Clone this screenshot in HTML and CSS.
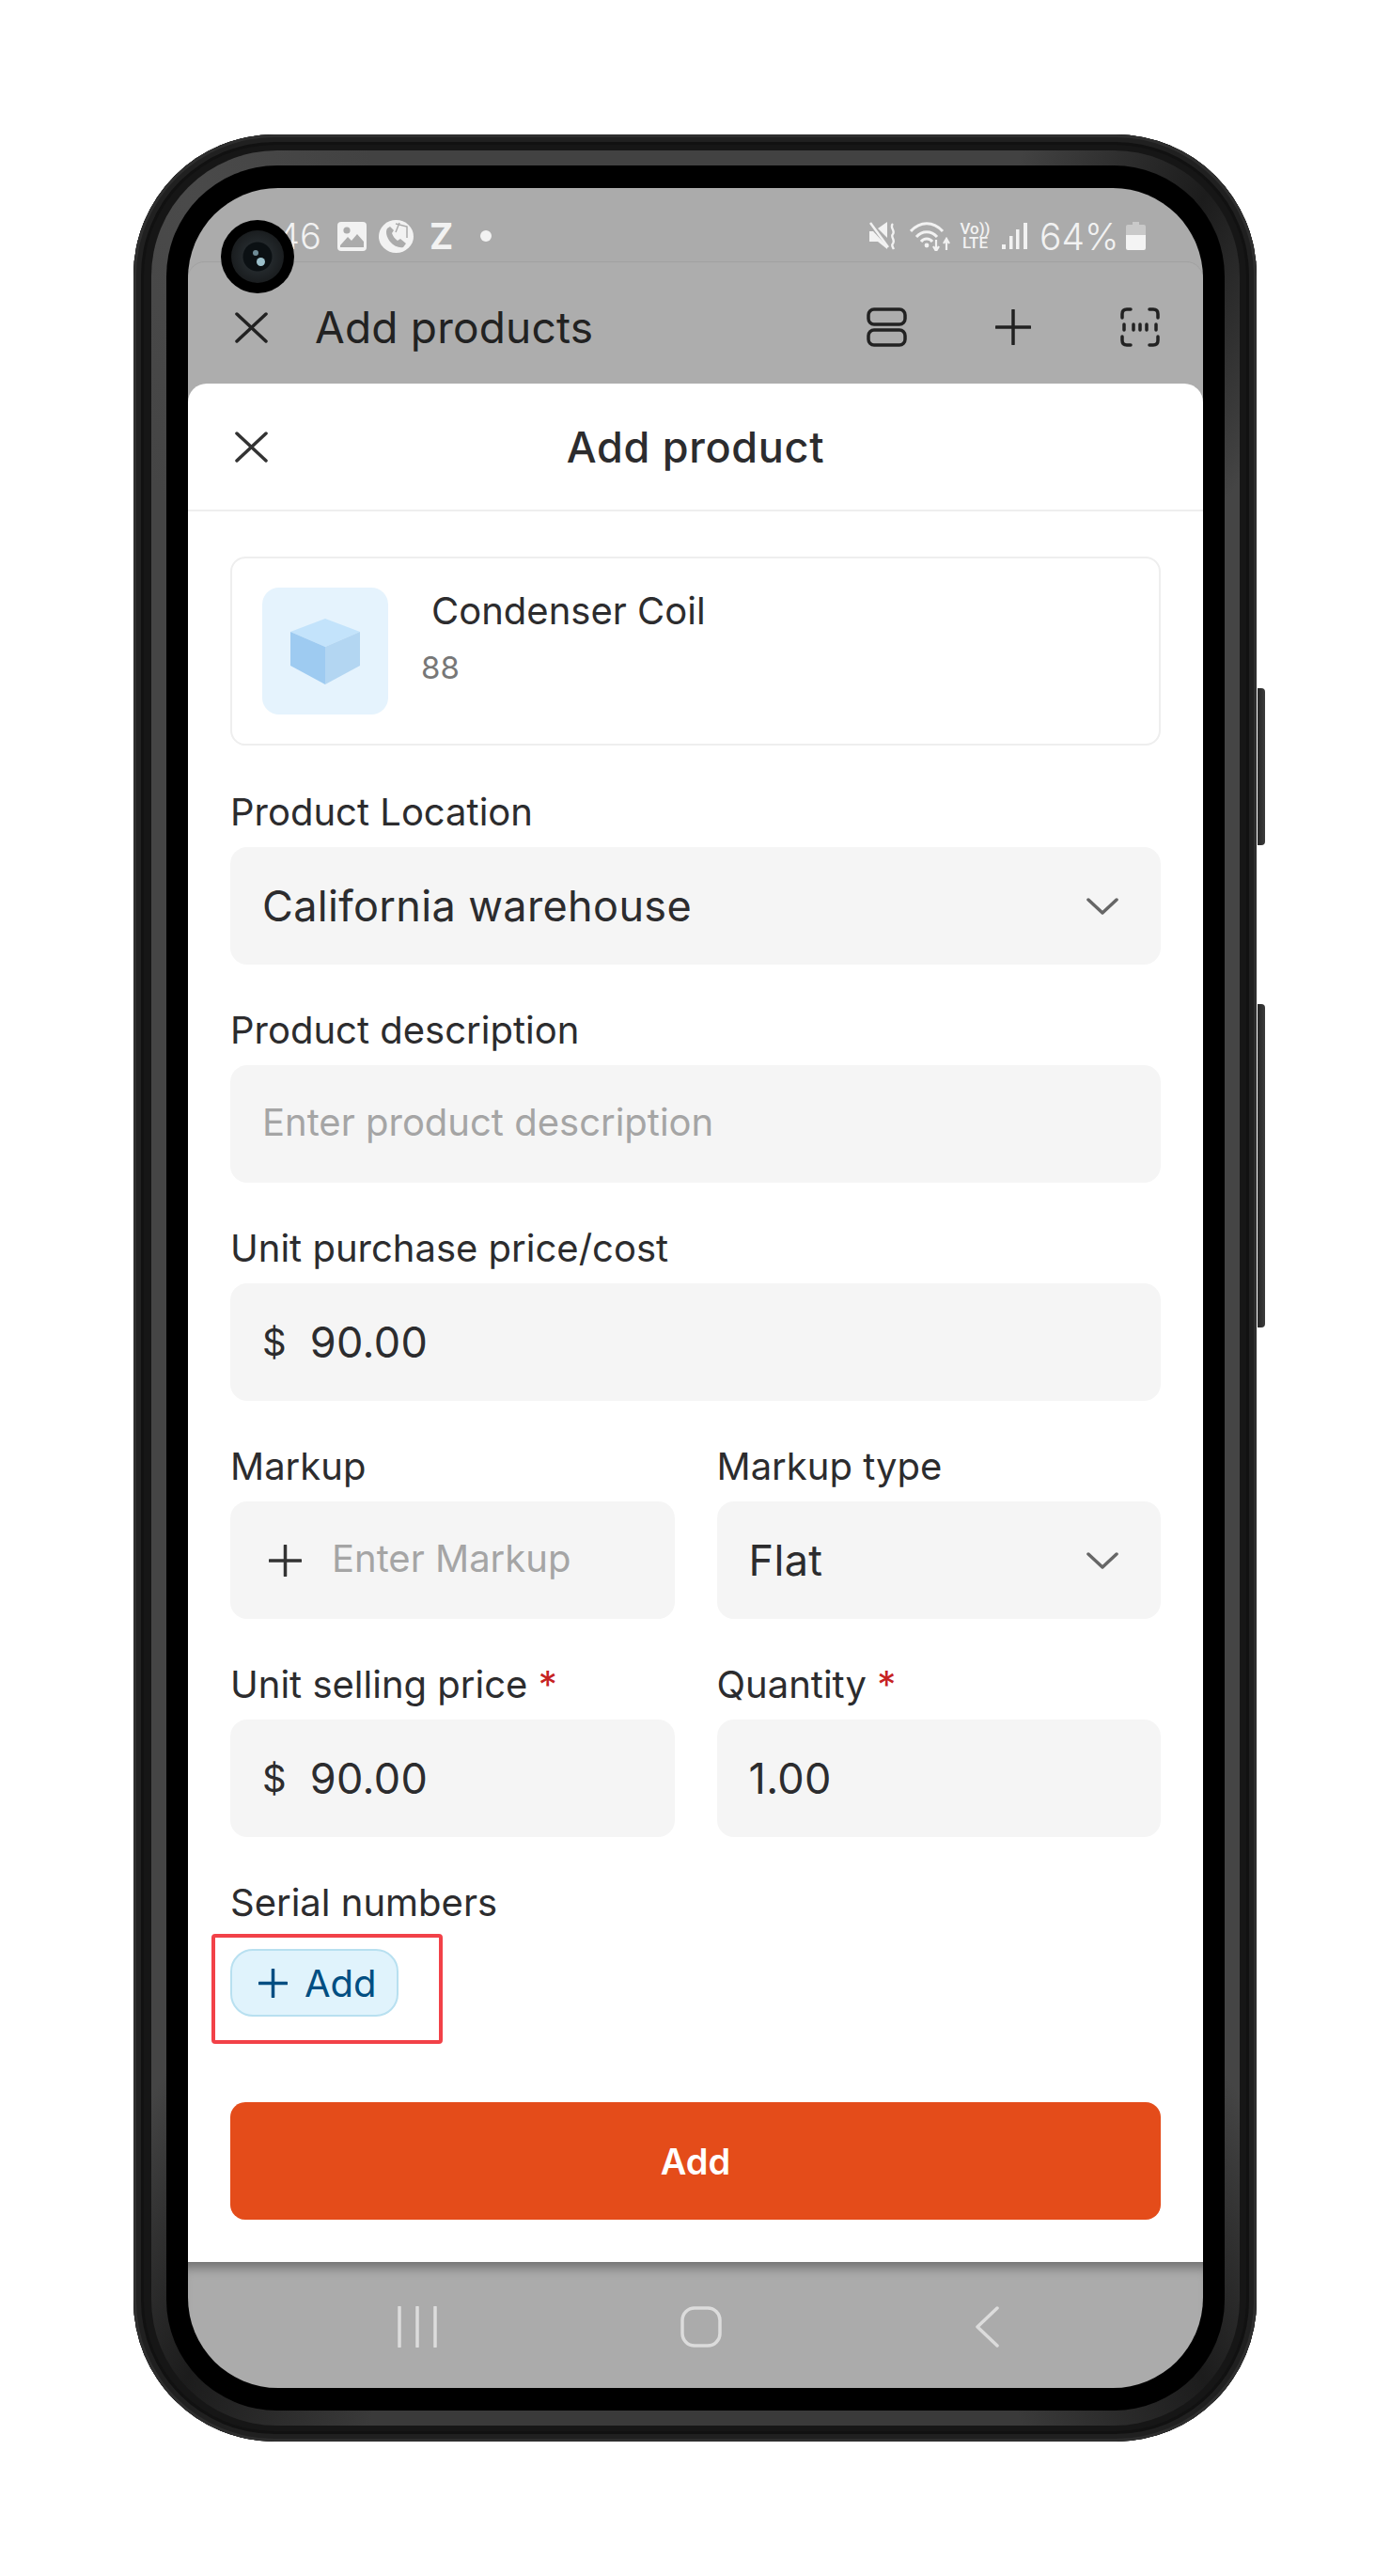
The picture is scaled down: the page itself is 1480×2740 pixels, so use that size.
FILE: index.html
```html
<!DOCTYPE html>
<html lang="en">
<head>
<meta charset="utf-8">
<title>Add product</title>
<link rel="stylesheet" href="styles.css">
</head>
<body>
<div class="phone">
  <div class="side-btn side-btn-power"></div>
  <div class="side-btn side-btn-volume"></div>
  <div class="ring">
    <div class="bezel">
      <div class="screen">
        <div class="camera"><div class="lens"><div class="glint glint-a"></div><div class="glint glint-b"></div></div></div>
        <div class="status">
          <div class="status-left">
            <span class="time">46</span>
            <svg class="st-img" viewBox="0 0 31 31"><rect width="31" height="31" rx="4" fill="#f2f2f2"/><circle cx="10" cy="9" r="3.6" fill="#ababab"/><path d="M3 25 L11 16 L15 20 L21 13 L28 21 V27 H3Z" fill="#ababab"/></svg>
            <svg class="st-call" viewBox="0 0 37 35"><ellipse cx="18.500" cy="17.500" rx="18.500" ry="17.500" fill="#f2f2f2"/><path d="M9 9 C7 12 8 18 12 23 C16 28 22 30 26 29 L29 25 L23 20 L20 22 C17 20 15 17 14 14 L16 11 L12 7Z" fill="#ababab"/><path d="M18 4 L30 7 L30 19 M22 3 L18 13" fill="none" stroke="#ababab" stroke-width="1.500"/></svg>
            <span class="st-z">Z</span>
            <span class="st-dot"></span>
          </div>
          <div class="status-right">
            <svg class="st-mute" viewBox="0 0 29 30"><path d="M0 10 H4 L19 26 V29 L9 21 H0Z" fill="#f2f2f2"/><path d="M9 7 L19 0 V17Z" fill="#f2f2f2"/><path d="M1 1 L20 27" stroke="#f2f2f2" stroke-width="2.500"/><path d="M25 2 C21 6 28 9 25 13 C22 16 28 19 25 23 C23 25 25 27 26 29" fill="none" stroke="#f2f2f2" stroke-width="2.400"/></svg>
            <svg class="st-wifi" viewBox="0 0 44 32"><path d="M1 11 C11 0 25 0 35 11 M7 17 C13 10 23 10 29 17 M12 22 C15 18 21 18 24 22" fill="none" stroke="#f2f2f2" stroke-width="3"/><circle cx="18" cy="26" r="2.400" fill="#f2f2f2"/><path d="M28 20 V31 M25 27 L28 32 L31 27 M39 31 V20 M36 24 L39 19 L42 24" fill="none" stroke="#f2f2f2" stroke-width="2.200"/></svg>
            <span class="st-volte"><span>Vo))</span><span>LTE</span></span>
            <svg class="st-signal" viewBox="0 0 27 30"><rect x="0" y="24" width="4" height="5" fill="#f2f2f2"/><rect x="8" y="15" width="3.500" height="14" fill="#f2f2f2"/><rect x="15" y="8" width="3.500" height="21" fill="#f2f2f2"/><rect x="23" y="1" width="4" height="28" fill="#f2f2f2"/></svg>
            <span class="st-pct">64%</span>
            <svg class="st-batt" viewBox="0 0 21 30"><path d="M7 0 H14 V3 H19 Q21 3 21 5 V14 H0 V5 Q0 3 2 3 H7Z" fill="#c9c9c9"/><path d="M0 14 H21 V28 Q21 30 19 30 H2 Q0 30 0 28Z" fill="#f4f4f4"/></svg>
          </div>
        </div>
        <div class="topcard">
          <svg class="ic-x" viewBox="0 0 35 33"><path d="M2 2 L33 31 M33 2 L2 31" fill="none" stroke="#222" stroke-width="3.500" stroke-linecap="round"/></svg>
          <span class="top-title">Add products</span>
          <div class="top-actions">
            <svg class="ic-list" viewBox="0 0 43 42"><rect x="2" y="2" width="39" height="16" rx="6" fill="none" stroke="#222" stroke-width="3.500"/><rect x="2" y="24" width="39" height="16" rx="6" fill="none" stroke="#222" stroke-width="3.500"/></svg>
            <svg class="ic-plus" viewBox="0 0 38 38"><path d="M19 1 V37 M1 19 H37" fill="none" stroke="#222" stroke-width="3.500" stroke-linecap="round"/></svg>
            <svg class="ic-scan" viewBox="0 0 42 42"><path d="M2 11 V7 Q2 2 7 2 H11 M31 2 H35 Q40 2 40 7 V11 M40 31 V35 Q40 40 35 40 H31 M11 40 H7 Q2 40 2 35 V31" fill="none" stroke="#222" stroke-width="3.500" stroke-linecap="round"/><path d="M4 18 V24 M14 18 V24 M21 18 V24 M28 18 V24 M38 18 V24" fill="none" stroke="#222" stroke-width="3.500" stroke-linecap="round"/></svg>
          </div>
        </div>
        <div class="sheet">
          <div class="sheet-head">
            <svg class="ic-x" viewBox="0 0 35 33"><path d="M2 2 L33 31 M33 2 L2 31" fill="none" stroke="#333" stroke-width="3.500" stroke-linecap="round"/></svg>
            <span class="sheet-title">Add product</span>
            <span></span>
          </div>
          <div class="form">
            <div class="product-card">
              <div class="thumb">
                <svg class="cube" viewBox="0 0 74 70"><path d="M37 0 L74 14 L37 30 L0 14Z" fill="#c3e3fb"/><path d="M0 14 L37 30 V70 L0 50Z" fill="#9ecbf1"/><path d="M74 14 L37 30 V70 L74 50Z" fill="#b3d6f2"/></svg>
              </div>
              <div class="product-text">
                <span class="product-name">Condenser Coil</span>
                <span class="product-sku">88</span>
              </div>
            </div>

            <div class="field">
              <label class="label">Product Location</label>
              <div class="input">
                <span class="value">California warehouse</span>
                <svg class="chev" viewBox="0 0 34 18"><path d="M2 2 L17 16 L32 2" fill="none" stroke="#666" stroke-width="3.500" stroke-linecap="round" stroke-linejoin="round"/></svg>
              </div>
            </div>

            <div class="field">
              <label class="label">Product description</label>
              <div class="input"><span class="placeholder">Enter product description</span></div>
            </div>

            <div class="field">
              <label class="label">Unit purchase price/cost</label>
              <div class="input"><span class="currency">$</span><span class="value">90.00</span></div>
            </div>

            <div class="row">
              <div class="field">
                <label class="label">Markup</label>
                <div class="input input-plus">
                  <svg class="ic-small-plus" viewBox="0 0 35 34"><path d="M17.500 1 V33 M1 17 H34" fill="none" stroke="#333" stroke-width="3.500" stroke-linecap="round"/></svg>
                  <span class="placeholder">Enter Markup</span>
                </div>
              </div>
              <div class="field">
                <label class="label">Markup type</label>
                <div class="input">
                  <span class="value">Flat</span>
                  <svg class="chev" viewBox="0 0 34 18"><path d="M2 2 L17 16 L32 2" fill="none" stroke="#666" stroke-width="3.500" stroke-linecap="round" stroke-linejoin="round"/></svg>
                </div>
              </div>
            </div>

            <div class="row">
              <div class="field">
                <label class="label">Unit selling price <span class="req">*</span></label>
                <div class="input"><span class="currency">$</span><span class="value">90.00</span></div>
              </div>
              <div class="field">
                <label class="label">Quantity <span class="req">*</span></label>
                <div class="input"><span class="value">1.00</span></div>
              </div>
            </div>

            <div class="field">
              <label class="label label-serial">Serial numbers</label>
              <div class="add-wrap">
                <div class="highlight"></div>
                <div class="add-chip">
                  <svg class="ic-chip-plus" viewBox="0 0 31 31"><path d="M15.500 1 V30 M1 15.500 H30" fill="none" stroke="#004e82" stroke-width="3.500" stroke-linecap="round"/></svg>
                  <span>Add</span>
                </div>
              </div>
            </div>

            <div class="submit">Add</div>
          </div>
        </div>
        <div class="navbar">
          <svg class="nav-recent" viewBox="0 0 42 44"><path d="M2 1 V43 M21 1 V43 M40 1 V43" fill="none" stroke="#dcdcdc" stroke-width="3.500" stroke-linecap="round"/></svg>
          <svg class="nav-home" viewBox="0 0 44 44"><rect x="2" y="2" width="40" height="40" rx="13" fill="none" stroke="#dcdcdc" stroke-width="3.500"/></svg>
          <svg class="nav-back" viewBox="0 0 26 44"><path d="M24 2 L3 22 L24 42" fill="none" stroke="#dcdcdc" stroke-width="3.500" stroke-linecap="round" stroke-linejoin="round"/></svg>
        </div>
      </div>
    </div>
  </div>
</div>
</body>
</html>
```
FILE: styles.css
```css
* { box-sizing: border-box; }
html, body { margin: 0; padding: 0; background: #fff; }
body { padding: 143px 0 0 142px; font-family: "Inter", "Liberation Sans", sans-serif; color: #2c2c2e; }
svg { display: block; flex: none; }

.phone { position: relative; width: 1195px; height: 2454px; background: #161616; border-radius: 150px; padding: 17px 18px 17px 19px; box-shadow: inset 0 0 0 3px #2e2e2e, inset 0 0 0 8px #202020, inset 0 0 0 11px #111; }
.side-btn { position: absolute; left: 1196px; width: 8px; background: linear-gradient(90deg, #262626, #3c3c3c); border-radius: 0 4px 4px 0; }
.side-btn-power { top: 589px; height: 167px; }
.side-btn-volume { top: 925px; height: 344px; }
.ring { height: 100%; border-radius: 134px; padding: 16px; background: conic-gradient(#424242 0 16deg, #1c1c1c 25deg, #454545 34deg 146deg, #1c1c1c 155deg, #3a3a3a 164deg 196deg, #1c1c1c 205deg, #454545 214deg 326deg, #4a4a4a 335deg, #424242 344deg); }
.bezel { height: 100%; background: #000; border-radius: 118px; padding: 24px 23px; }
.screen { position: relative; height: 100%; background: #ababab; border-radius: 96px; overflow: hidden; display: flex; flex-direction: column; }

.camera { position: absolute; left: 35px; top: 34px; width: 78px; height: 78px; background: #000; border-radius: 50%; display: flex; align-items: center; justify-content: center; z-index: 5; }
.lens { position: relative; width: 56px; height: 56px; border-radius: 50%; background: radial-gradient(circle, #0b1013 0 15px, #23282b 16px, #1a1d1f 28px); }
.glint { position: absolute; border-radius: 50%; }
.glint-a { left: 23px; top: 21px; width: 6px; height: 6px; background: #6e8b96; }
.glint-b { left: 27px; top: 29px; width: 9px; height: 9px; background: #9cc0cb; }

.status { height: 79px; flex: none; display: flex; justify-content: space-between; padding: 33px 61px 0 0; color: #f2f2f2; font-family: "Inter", sans-serif; }
.status-left, .status-right { display: flex; align-items: center; height: 36px; }
.status-left { padding-left: 95px; }
.time { font-size: 38px; font-weight: 300; width: 46px; text-align: right; }
.st-img { width: 31px; height: 31px; margin-left: 18px; }
.st-call { width: 37px; height: 35px; margin-left: 13px; }
.st-z { font-size: 38px; font-weight: 700; margin-left: 17px; width: 23px; }
.st-dot { width: 12px; height: 12px; background: #f2f2f2; border-radius: 50%; margin-left: 31px; }
.st-mute { width: 29px; height: 30px; }
.st-wifi { width: 44px; height: 32px; margin-left: 14px; }
.st-volte { display: flex; flex-direction: column; align-items: center; width: 31px; margin-left: 10px; font-family: "Roboto", sans-serif; font-size: 17px; line-height: 15px; font-weight: 500; }
.st-signal { width: 27px; height: 30px; margin-left: 13px; }
.st-pct { font-size: 39px; font-weight: 300; margin-left: 13px; width: 84px; white-space: nowrap; }
.st-batt { width: 21px; height: 30px; margin-left: 8px; }

.topcard { height: 160px; flex: none; margin-bottom: -31px; background: #adadad; border-radius: 18px 18px 0 0; box-shadow: 0 -1px 0 #a1a1a1; display: flex; align-items: flex-start; padding: 53px 46px 0 50px; }
.ic-x { width: 35px; height: 33px; }
.top-title { font-size: 46px; line-height: 33px; margin-left: 50px; color: #222; letter-spacing: .2px; }
.top-actions { margin-left: auto; margin-top: -5px; display: flex; align-items: center; }
.ic-list { width: 43px; height: 42px; }
.ic-plus { width: 38px; height: 38px; margin-left: 94px; }
.ic-scan { width: 42px; height: 42px; margin-left: 95px; }

.sheet { position: relative; z-index: 1; height: 1998px; flex: none; background: #fff; border-radius: 20px 20px 0 0; }
.sheet-head { height: 136px; border-bottom: 2px solid #eeeeee; display: grid; grid-template-columns: 1fr auto 1fr; align-items: center; padding: 0 50px; }
.sheet-title { font-size: 45px; font-weight: 450; color: #2c2c2e; letter-spacing: .7px; }
.form { padding: 48px 45px 0 45px; display: flex; flex-direction: column; gap: 45px; }

.product-card { height: 201px; border: 2px solid #eeeeee; border-radius: 16px; padding: 31px 32px; display: flex; gap: 35px; margin-bottom: 1px; }
.thumb { width: 134px; height: 135px; flex: none; background: #e5f3fd; border-radius: 18px; display: flex; align-items: center; justify-content: center; }
.cube { width: 74px; height: 70px; }
.product-text { display: flex; flex-direction: column; }
.product-name { font-size: 40px; line-height: 50px; margin-left: 11px; color: #2c2c2e; }
.product-sku { font-size: 33px; line-height: 40px; margin-top: 15px; color: #777; }

.field { min-width: 0; }
.label { display: block; font-size: 40px; line-height: 50px; margin-bottom: 12px; color: #2c2c2e; white-space: nowrap; }
.label-serial { margin-bottom: 24px; }
.req { color: #c62222; }
.input { height: 125px; background: #f5f5f5; border-radius: 18px; display: flex; align-items: center; padding: 0 45px 0 34px; }
.value { font-size: 45px; color: #2c2c2e; letter-spacing: .35px; }
.placeholder { font-size: 40px; color: #a5a5a5; padding-bottom: 4px; }
.currency { font-size: 40px; color: #2c2c2e; margin-right: 25px; }
.chev { width: 34px; height: 18px; margin-left: auto; }
.row { display: grid; grid-template-columns: 1fr 1fr; gap: 45px; }
.input-plus { padding-left: 41px; }
.ic-small-plus { width: 35px; height: 34px; margin-right: 32px; }

.add-wrap { position: relative; width: 179px; }
.highlight { position: absolute; left: -20px; top: -16px; width: 246px; height: 117px; border: 4px solid #f24148; border-radius: 4px; }
.add-chip { height: 72px; background: #e0f3fc; border: 2px solid #b8e0f0; border-radius: 24px; display: flex; align-items: center; padding-left: 28px; gap: 18px; color: #004e82; font-size: 40px; }
.ic-chip-plus { width: 31px; height: 31px; }

.submit { height: 125px; margin-top: 46px; background: #e44c1a; border-radius: 16px; color: #fff; font-size: 38px; font-weight: 600; display: flex; align-items: center; justify-content: center; }

.navbar { flex: 1; position: relative; box-shadow: inset 0 14px 12px -8px rgba(0,0,0,.35); padding: 47px 0 0 223px; display: flex; align-items: flex-start; }
.nav-recent { width: 42px; height: 44px; }
.nav-home { width: 44px; height: 44px; margin-left: 259px; }
.nav-back { width: 26px; height: 44px; margin-left: 269px; }
```
